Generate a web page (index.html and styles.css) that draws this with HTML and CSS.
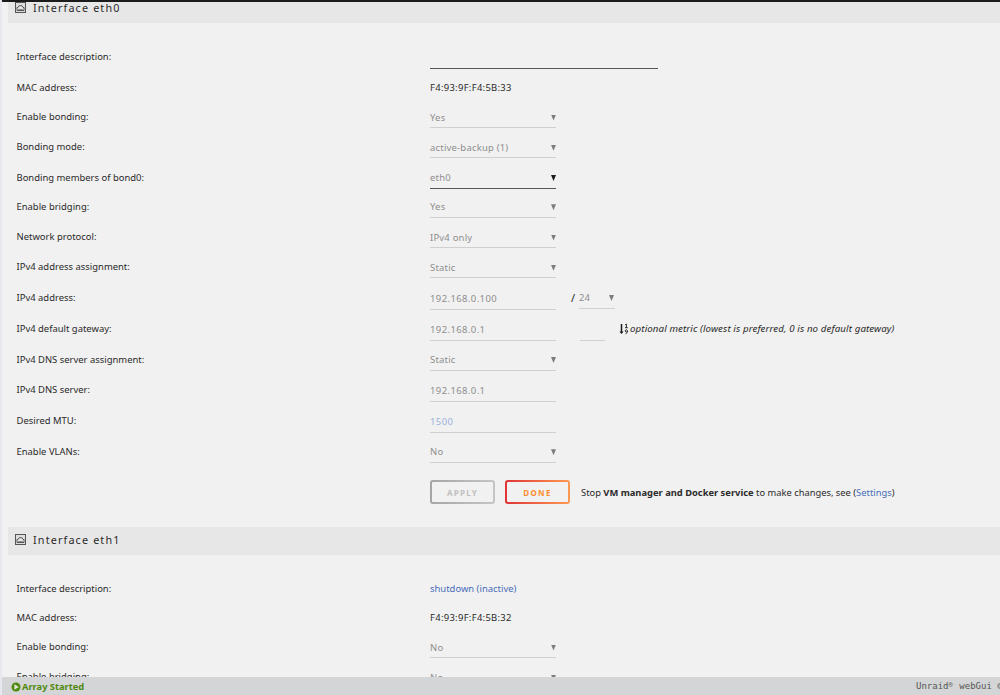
FILE: index.html
```
<!DOCTYPE html>
<html lang="en">
<head>
    <meta charset="UTF-8">
    <meta name="viewport" content="width=device-width, initial-scale=1.0">
    <title>Network Settings</title>
    <link rel="stylesheet" href="styles.css">
</head>
<body>

    <!-- Icons shared by both interfaces -->
    <svg class="defs" width="0" height="0">
        <symbol id="icon-port" viewBox="0 0 11 11">
            <rect x="0.5" y="0.5" width="10" height="10" fill="#ddd" stroke="#555"/>
            <path d="M2 8.5V5.5H3L4 3.8H7L8 5.5H9V8.5Z" fill="#eee" stroke="#444" stroke-width="0.9"/>
            <path d="M3.2 7.4H7.8" stroke="#666" stroke-width="0.8"/>
        </symbol>
    </svg>

    <div class="page">

        <!-- Interface eth0 -->
        <div class="title"><svg class="port"><use href="#icon-port"/></svg><span>Interface eth0</span></div>
        <div class="settings">
            <div class="row text"><label>Interface description:</label><span class="field wide active"></span></div>
            <div class="row plain"><label>MAC address:</label><span class="value mac">F4:93:9F:F4:5B:33</span></div>
            <div class="row select"><label>Enable bonding:</label><span class="field drop">Yes</span></div>
            <div class="row select"><label>Bonding mode:</label><span class="field drop">active-backup (1)</span></div>
            <div class="row multi"><label>Bonding members of bond0:</label><span class="field drop active">eth0</span></div>
            <div class="row select"><label>Enable bridging:</label><span class="field drop">Yes</span></div>
            <div class="row select"><label>Network protocol:</label><span class="field drop">IPv4 only</span></div>
            <div class="row select"><label>IPv4 address assignment:</label><span class="field drop">Static</span></div>
            <div class="row text"><label>IPv4 address:</label><span class="field ip">192.168.0.100</span><span class="slash">/</span><span class="field drop mask">24</span></div>
            <div class="row text"><label>IPv4 default gateway:</label><span class="field ip">192.168.0.1</span><span class="field metric"></span>
                <svg class="sort" viewBox="0 0 10 12">
                    <path d="M2.5 1V10" fill="none" stroke="#1c1b1b" stroke-width="1.5"/>
                    <path d="M0.5 8.4H4.5L2.5 11Z" fill="#1c1b1b"/>
                    <path d="M6.2 1.8L7.4 1V4.6M6 4.7H8.8M8.4 8.2A1.1 1.1 0 1 1 8.4 7.6C8.6 9 8.1 10.2 6.6 10.8" fill="none" stroke="#1c1b1b" stroke-width="0.9"/>
                </svg>
                <em>optional metric (lowest is preferred, 0 is no default gateway)</em></div>
            <div class="row select"><label>IPv4 DNS server assignment:</label><span class="field drop">Static</span></div>
            <div class="row text"><label>IPv4 DNS server:</label><span class="field ip">192.168.0.1</span></div>
            <div class="row text"><label>Desired MTU:</label><span class="field ip mtu">1500</span></div>
            <div class="row select"><label>Enable VLANs:</label><span class="field drop">No</span></div>
        </div>
        <div class="actions">
            <button class="apply" disabled>APPLY</button>
            <button class="done">DONE</button>
            <p>Stop <b>VM manager and Docker service</b> to make changes, see (<a href="#">Settings</a>)</p>
        </div>

        <!-- Interface eth1 -->
        <div class="title"><svg class="port"><use href="#icon-port"/></svg><span>Interface eth1</span></div>
        <div class="settings second">
            <div class="row plain"><label>Interface description:</label><span class="value link">shutdown (inactive)</span></div>
            <div class="row plain"><label>MAC address:</label><span class="value mac">F4:93:9F:F4:5B:32</span></div>
            <div class="row select"><label>Enable bonding:</label><span class="field drop">No</span></div>
            <div class="row select"><label>Enable bridging:</label><span class="field drop">No</span></div>
        </div>
    </div>

    <!-- Footer -->
    <div class="footer">
        <span class="status">
            <svg viewBox="0 0 10 10"><circle cx="5" cy="5" r="4.5" fill="#4f8a10"/><path d="M3.4 2.3L7.8 5L3.4 7.7Z" fill="#e4e8dc"/></svg>
            <span>Array Started</span>
        </span>
        <span class="version">Unraid<sup>&reg;</sup> webGui &copy;2021</span>
    </div>

</body>
</html>
```

FILE: styles.css
```
/* Global Styles */
* {
    box-sizing: border-box;
}

body {
    margin: 0;
    height: 695px;
    overflow: hidden;
    display: flex;
    flex-direction: column;
    font-family: "Noto Sans", sans-serif;
    font-size: 9.45px;
    line-height: 20px;
    color: #2b2a2a;
    background: #f1f1f1;
    border-left: 2px solid #e7e7ed;
}

.defs {
    display: none;
}

.page {
    flex: 1;
    min-height: 0;
    overflow: hidden;
    border-top: 2px solid #1c1b1b;
}

/* Section title */
.title {
    display: flex;
    align-items: center;
    height: 28px;
    margin-left: 6px;
    padding: 0 0 3px 7px;
    background: #e7e7e7;
    font-size: 10.8px;
    letter-spacing: 1.15px;
}

.title:first-child {
    margin-top: -7px;
}

.title span {
    padding-top: 1px;
}

.port {
    width: 11px;
    height: 11px;
    margin-right: 7px;
}

/* Settings rows */
.settings {
    padding: 24px 0 0 14.5px;
}

.row {
    display: flex;
    align-items: flex-start;
    white-space: nowrap;
}

.row.text {
    height: 31px;
}

.row.select {
    height: 30.25px;
}

.row.plain {
    height: 29px;
}

.row.multi {
    height: 29.25px;
}

.row label {
    width: 413.5px;
}

.field {
    display: block;
    width: 126px;
    height: 21px;
    line-height: 21px;
    border-bottom: 1px solid #d0d0d0;
    color: #8e8e8e;
    letter-spacing: 0.22px;
}

.row.text .field {
    height: 22px;
}

.field.wide {
    width: 228px;
}

.field.active {
    border-bottom-color: #555;
}

.field.ip {
    letter-spacing: 0.42px;
}

.row .field.mtu {
    color: #9bb1dc;
}

.mac {
    letter-spacing: 0.3px;
}

.drop {
    display: flex;
    justify-content: space-between;
    align-items: center;
}

.drop::after {
    content: "";
    width: 5px;
    height: 6px;
    margin-top: 1px;
    background: #7c7c7c;
    clip-path: polygon(0 0, 100% 0, 50% 100%);
}

.drop.active::after {
    background: #1c1b1b;
}

.slash {
    width: 8px;
    margin-left: 15px;
    font-size: 11px;
}

.row.text .field.mask {
    width: 36px;
    height: 21px;
}

.field.mask::after {
    margin-right: 1px;
}

.field.metric {
    width: 25px;
    margin-left: 24px;
}

.sort {
    width: 10px;
    height: 12px;
    margin: 4px 1px 0 14px;
}

.row em {
    font-size: 9.7px;
    letter-spacing: 0.12px;
}

a,
.link {
    color: #486dba;
    text-decoration: none;
}

/* Buttons */
.actions {
    display: flex;
    align-items: center;
    height: 24px;
    margin: 8px 0 23px 428px;
}

.actions button {
    width: 65px;
    height: 24px;
    margin-right: 10px;
    padding: 0;
    border: 2px solid transparent;
    border-radius: 3px;
    font-family: inherit;
    font-size: 8px;
    font-weight: bold;
    letter-spacing: 1.3px;
}

.actions .apply {
    color: #c0c0c0;
    background: linear-gradient(#f1f1f1, #f1f1f1) padding-box, linear-gradient(90deg, #a5a5a5, #c5c5c5) border-box;
}

.actions .done {
    color: #ff8c2f;
    background: linear-gradient(#f1f1f1, #f1f1f1) padding-box, linear-gradient(90deg, #e03237, #fd9b52) border-box;
}

.actions p {
    margin: 1px 0 0 1px;
    font-size: 9.35px;
    white-space: nowrap;
}

/* Footer */
.footer {
    display: flex;
    justify-content: space-between;
    height: 18px;
    padding-left: 9px;
    overflow: hidden;
    background: #d4d5d6;
    white-space: nowrap;
}

.status {
    display: flex;
    align-items: center;
    padding-top: 1px;
    color: #4f8a10;
    font-size: 9.3px;
    font-weight: bold;
}

.status svg {
    width: 10px;
    height: 10px;
    margin-right: 1px;
}

.version {
    width: 84px;
    line-height: 18px;
    font-family: "DejaVu Sans Mono", monospace;
    font-size: 9px;
    color: #555;
}

.version sup {
    display: inline-block;
    width: 5.4px;
    font-size: 7px;
    line-height: 0;
    vertical-align: 2px;
}
```
